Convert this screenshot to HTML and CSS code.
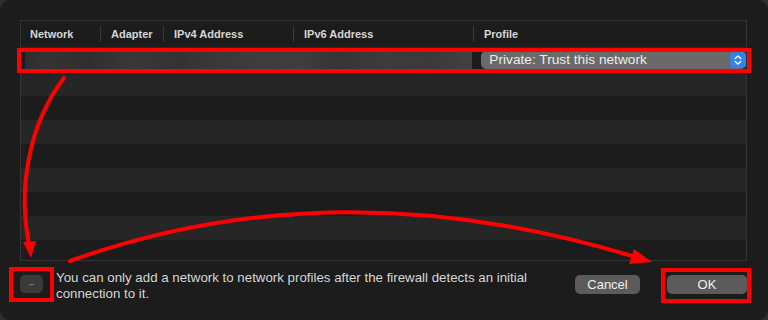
FILE: index.html
```html
<!DOCTYPE html>
<html>
<head>
<meta charset="utf-8">
<link rel="stylesheet" href="styles.css">
</head>
<body>
<div class="window">
  <div class="table">
    <div class="thead">
      <div class="th c1">Network</div>
      <div class="th c2">Adapter</div>
      <div class="th c3">IPv4 Address</div>
      <div class="th c4">IPv6 Address</div>
      <div class="th c5">Profile</div>
    </div>
    <div class="row dark first">
      <div class="redacted"></div>
      <div class="popup">
        <span class="popup-label">Private: Trust this network</span>
        <span class="stepper">
          <svg width="16" height="16" viewBox="0 0 16 16"><path d="M5.2 6.6 L8 3.9 L10.8 6.6 M5.2 9.4 L8 12.1 L10.8 9.4" fill="none" stroke="#fff" stroke-width="1.4" stroke-linecap="round" stroke-linejoin="round"/></svg>
        </span>
      </div>
    </div>
    <div class="row light"></div>
    <div class="row dark"></div>
    <div class="row light"></div>
    <div class="row dark"></div>
    <div class="row light"></div>
    <div class="row dark"></div>
    <div class="row light"></div>
    <div class="row dark"></div>
  </div>
  <div class="footer">
    <button class="minus"><span class="minus-bar"></span></button>
    <p class="note">You can only add a network to network profiles after the firewall detects an initial<br>connection to it.</p>
    <div class="actions">
      <button class="btn cancel">Cancel</button>
      <button class="btn ok">OK</button>
    </div>
  </div>
  <svg class="annotations" width="768" height="320" viewBox="0 0 768 320">
    <g fill="none" stroke="#ff0000" stroke-width="4">
      <rect x="19" y="50" width="730" height="21"/>
      <rect x="11" y="269" width="41" height="31"/>
      <rect x="663" y="270" width="86" height="31"/>
      <path d="M64 78 C 28 125, 18 190, 29 244" stroke-linecap="round"/>
      <path d="M70 261 Q 335 166 632 256" stroke-linecap="round"/>
    </g>
    <g fill="#ff0000">
      <polygon points="23,242 36,241 31,258"/>
      <polygon points="652,262 634,249 629,264"/>
    </g>
  </svg>
</div>
</body>
</html>
```
FILE: styles.css
```css
* { box-sizing: border-box; }
html, body { margin: 0; padding: 0; }
body {
  width: 768px;
  height: 320px;
  background: #2e2e2e;
  font-family: "Liberation Sans", Arial, sans-serif;
  overflow: hidden;
}
.window {
  position: relative;
  width: 768px;
  height: 320px;
  background: #1c1c1c;
  border-radius: 11px;
  padding: 20px 21px 0 20px;
}
.table {
  height: 241px;
  border: 1px solid #343434;
  overflow: hidden;
  background: #1c1c1c;
}
.thead {
  display: flex;
  height: 27px;
  border-bottom: 1px solid #2a2a2a;
  align-items: center;
}
.th {
  height: 16px;
  line-height: 16px;
  padding-left: 10px;
  font-size: 11px;
  font-weight: bold;
  color: #d6d6d6;
  border-left: 1px solid #3a3a3a;
}
.th.c1 { width: 79px; border-left: none; padding-left: 9px; }
.th.c2 { width: 63px; }
.th.c3 { width: 130px; }
.th.c4 { width: 180px; }
.th.c5 { flex: 1; }
.row { height: 24px; }
.row.dark { background: #1c1c1c; }
.row.light { background: #262626; }
.row.first {
  display: flex;
  align-items: center;
  padding-left: 4px;
}
.redacted {
  width: 448px;
  height: 18px;
  background: linear-gradient(90deg, #2c2c2c 0%, #343434 4%, #2f2f2f 14%, #383838 24%, #333333 34%, #3b3b3b 46%, #3e3e3e 62%, #353535 70%, #3c3c3c 80%, #3a3a3a 90%, #414141 100%);
}
.popup {
  margin-left: 9px;
  width: 265px;
  height: 18px;
  border-radius: 5px;
  background: #6a6a6a;
  display: flex;
  align-items: center;
  justify-content: space-between;
  padding-left: 8px;
  padding-right: 0;
}
.popup-label {
  font-size: 13.7px;
  color: #ececec;
  line-height: 18px;
}
.stepper {
  width: 16px;
  height: 16px;
  border-radius: 4px;
  background: #3382e5;
  display: flex;
}
.footer {
  display: flex;
  align-items: flex-start;
  padding-top: 9px;
}
.minus {
  margin: 5px 13px 0 0;
  width: 23px;
  height: 18px;
  border: none;
  border-radius: 5px;
  background: #3a3a3a;
  padding: 0;
  display: flex;
  align-items: center;
  justify-content: center;
}
.minus-bar {
  width: 5px;
  height: 1px;
  background: #7a7a7a;
  margin-top: 1px;
}
.note {
  margin: 0;
  font-size: 13.3px;
  line-height: 16px;
  color: #d6d6d6;
}
.actions {
  margin-left: auto;
  margin-top: 5px;
  display: flex;
  gap: 27px;
}
.btn {
  height: 19px;
  border: none;
  border-radius: 5px;
  background: #5b5b5b;
  color: #f0f0f0;
  font-family: "Liberation Sans", Arial, sans-serif;
  font-size: 13px;
  padding: 0;
}
.cancel { width: 65px; }
.ok { width: 80px; }
.annotations {
  position: absolute;
  left: 0;
  top: 0;
  pointer-events: none;
}
```
